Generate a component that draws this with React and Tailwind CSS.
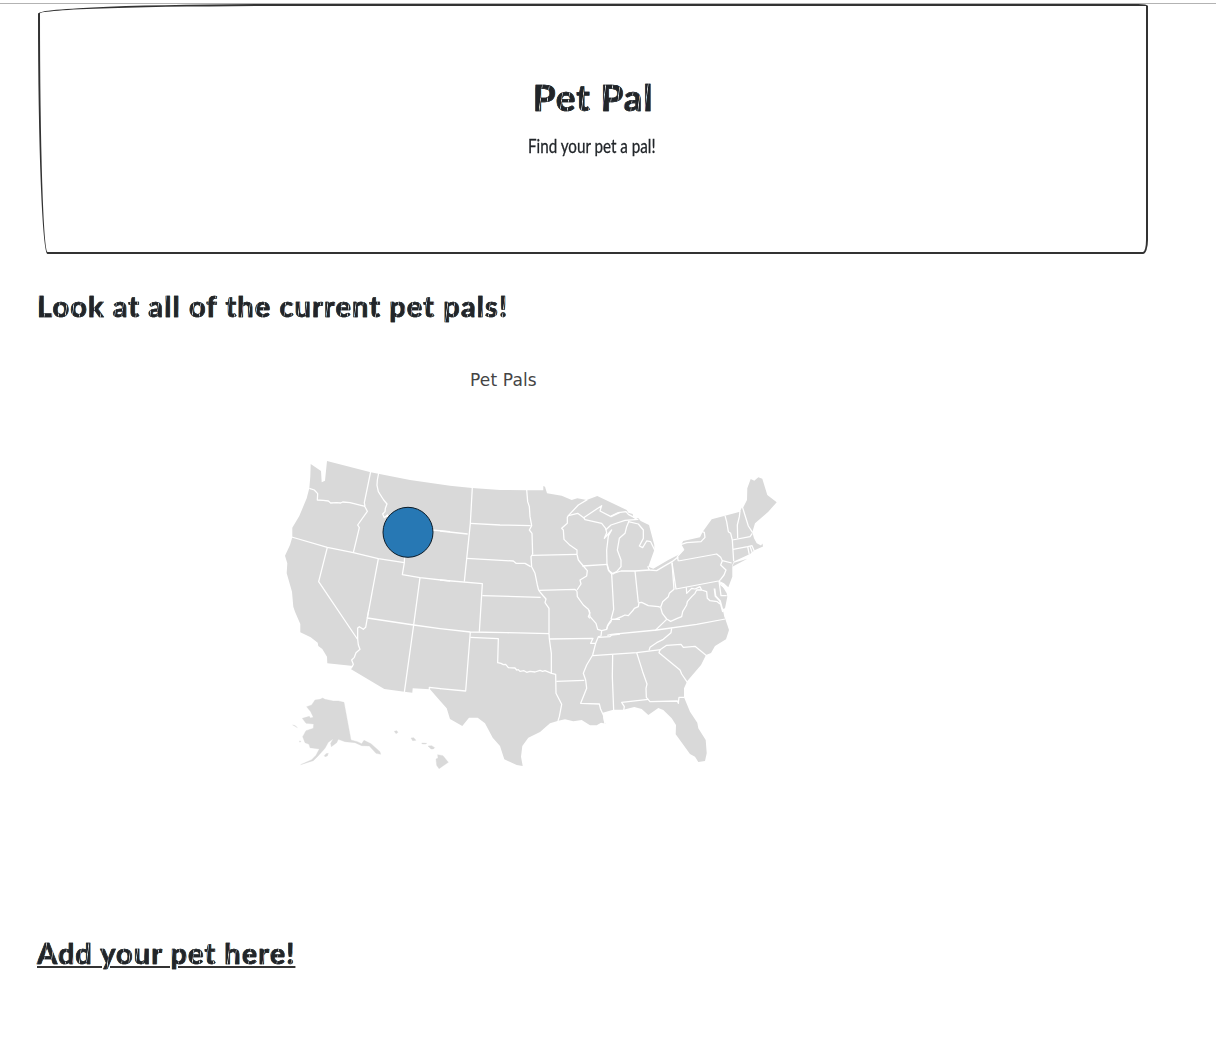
const ns = "fill-none stroke-white";

const sketch =
  "bg-[repeating-linear-gradient(97deg,#212529_0px,#212529_3px,#dfe1e3_3.6px,#212529_4.4px,#212529_7px)] bg-clip-text text-transparent [-webkit-text-stroke:0.6px_#212529]";

const mainland =
  "310.7,464 321,471 321.7,482.3 325,480.7 327,461 370.7,472.3 410,480 450,485.7 472,488 500,490 526.7,490.3 543.3,490.3 543.3,486 545,486.7 547,493.3 561.7,495.7 571.7,500 577.3,498.3 586.7,500 597.3,496 626.7,510 628.3,512.7 632.7,514 633.3,517.7 636,519.3 638,517.7 640.7,521 649,525 654.3,545 654.3,550 648.3,566.7 653.3,568.7 668.3,560 680,554 684,549 681.3,544.3 683.3,541 700,537.3 702.7,531.7 711.7,519.3 725,515.7 740,511.7 741.7,507.7 743.3,507.3 747,500 747.3,488.3 750.7,479 754.3,480.7 758.3,477.3 762.3,478.7 767.3,495 776.7,502.3 768.3,511.7 755,523.3 752.3,532.3 754,538.3 756.7,543.3 761,545.5 762.5,543.5 763,546.5 755,550 750,554 733.8,561.5 732.3,565 732.3,576.7 728.3,587.3 724,583.3 719.3,581 726.7,593.3 727.3,596.7 725,608.3 722.7,609 724.3,616.7 725.3,619 729,630 726,639.3 715,646 711,653 706,655 701,665 687.3,681 684,688.3 684,697.3 690,711.7 697.3,722.7 698.3,728.3 705.7,740 706.7,753.3 705,761 698.3,762 695,756.7 690,754 675.7,734.3 676,725 671.7,718.3 663.3,710 658.3,708 648.3,715 641.7,709 634.3,707 623.3,709.7 613.3,709.7 602.7,712.7 604,721.7 606,723.7 601,722.7 596.7,725.3 590,725.3 581.7,720 573.3,721.3 565,719.3 558.3,720.7 550,723.3 540,732 528.3,737.7 522.3,746 521,756.7 522.7,766 516.7,765 504.3,759.3 500,746 492.7,737.7 485,723.3 477.7,717.7 469,717.7 462.3,726 450,719 446.7,708.3 440,700.7 430,689.3 412.7,688.3 412.3,692.7 404.3,691.7 384.3,689 350.7,669 353.3,666 327.3,663.3 327,656.7 322.3,649 318.3,646 317.7,642.7 310.7,637.3 300.3,632.3 300.3,624 295,611.7 293.3,606.7 292,591.7 286.7,573.3 287.3,563.3 285,555.7 290,545 292.3,537.3 292.3,527.7 299.3,516 306.7,498.3 309.3,488.3 310.3,476.7";

const northwest = [
  "118,115 133,120 143,131 142,150 160,151 175,153 182,159 200,158 212,159 218,156 240,158 285,169",
  "302,65 283,158 285,170 292,184 263,225 268,233 250,308",
  "326,69 322,90 321,106 325,125 341,150 351,162 346,175 345,185 338,192 343,203 352,195 370,240 402,245 485,240 540,245",
  "65,261 172,292 250,308 325,326 403,338",
  "172,292 146,395 262,567",
  "325,326 292,504",
  "407,245 403,338 397,374 450,383 540,393",
  "450,383 431,525 403,727",
];
const north = [
  "0,243 83,252",
  "97,112 91,220 73,395",
  "91,220 180,225 272,227",
  "260,119 263,155 268,170 270,200 275,227 268,240 276,250 278,313",
  "80,325 220,333 228,340 255,340 272,350",
  "275,316 411,313",
  "278,313 273,320 275,350 285,370 292,405 296,421",
  "296,421 405,418 411,424",
  "411,313 411,300 388,284 372,268 370,240 365,235 382,220 382,202 385,197 415,165 442,149",
  "385,197 413,190 431,203 435,209 485,220 497,235 500,248 493,265 515,240 505,258 500,300 501,345 507,362 521,373",
  "431,203 485,167 480,183 513,200 540,187",
  "427,348 503,343",
  "411,313 415,330 430,348 442,362 440,378 420,390 423,402 411,420",
  "411,424 412,440 430,465 445,478 450,488 445,500 450,505",
  "0,390 127,401 118,545",
  "127,437 302,442",
  "296,421 310,438 318,447 315,458 327,475 327,550",
];
const northeast = [
  "216,338 228,417 355,393",
  "235,333 350,312 362,322 367,332 395,339",
  "367,332 362,345 378,360 372,375 362,388 357,393 363,437 380,437",
  "357,393 364,406 376,415 385,430",
  "235,333 232,320 252,298",
  "242,284 260,278 303,275 315,262 313,247 306,245",
  "143,349 148,360 170,362 190,350 216,335 235,320",
  "40,370 63,363 105,363 148,360",
  "105,363 115,458",
  "35,372 41,478 33,508",
  "375,197 380,215 385,245 392,250 397,270 401,334",
  "420,183 418,200 412,225 413,265",
  "397,270 450,260 457,250",
  "427,170 445,228 458,248",
  "399,298 443,290 456,287 463,304",
  "443,290 448,314",
  "450,289 457,309",
  "22,343 25,360 35,372 50,365 63,350 63,330 52,300 58,265 75,250 80,230 87,213",
  "17,240 33,225 75,211 115,208",
  "33,198 55,188 78,185 85,193 108,205",
  "85,215 115,222 130,240 130,265 118,288 128,293 140,273 152,275 165,302",
  "33,508 45,508 65,500 75,495 85,497 100,480 103,475 115,470 117,458 125,457 145,467 175,470 182,472",
  "182,472 188,455 205,440 208,430 222,418 216,338",
  "182,472 187,490 200,507 212,514 230,506 245,500 248,485 260,465 262,455 275,440 285,430 290,420 305,420",
  "259,412 260,430 275,415 285,417 300,410 305,420 320,425 322,445 330,452 352,455 360,462",
];
const southwest = [
  "296,0 287,52 280,58 268,50 263,54 263,87 265,105 270,118 258,128 253,142 245,150 250,163 243,175",
  "292,24 431,45 510,56",
  "478,240 478,232 512,236",
];
const south = [
  "0,236 77,243 91,66",
  "0,56 91,66 200,68 327,71",
  "91,82 175,86 173,158 183,160 190,164 197,163 205,173 225,174 230,180 235,179 240,184 252,182 260,187 270,184 285,186 300,181 308,184 315,182 335,190 347,193 348,250 365,283 358,320 354,333",
  "327,70 328,87 334,130 334,190",
  "328,87 459,85 452,100 467,100",
  "447,0 450,20 468,40 473,58 485,62 483,78 475,80 467,100 458,135 440,165 430,190 437,210 440,235 422,280 478,282 482,298 490,315 495,342",
  "349,214 433,211",
  "518,134 517,200 521,300",
  "485,62 500,58 505,42 513,30",
  "475,82 510,80 515,75 540,72",
];
const southeast = [
  "22,76 35,73 170,60 290,43 376,27",
  "-22,137 110,128 183,119",
  "215,55 213,68 190,88 170,98 150,112 147,121",
  "165,62 200,28",
  "110,128 128,185 141,222 138,235 139,262 150,275 232,273 235,280 237,262 253,262",
  "145,268 65,277 73,290 71,301",
  "180,119 177,128 240,180 245,192 262,217",
  "180,119 200,106 243,103 250,112 285,109 320,137",
  "20,58 22,48 33,35 35,28 60,28",
];

const regions = [
  { at: "translate(270 450) scale(.33333)", lines: northwest },
  { at: "translate(440 450) scale(.33333)", lines: north },
  { at: "translate(600 450) scale(.33333)", lines: northeast },
  { at: "translate(270 610) scale(.33333)", lines: southwest },
  { at: "translate(440 610) scale(.33333)", lines: south },
  { at: "translate(600 610) scale(.33333)", lines: southeast },
];

const islands = [
  "158,264 165,268 190,273 205,273 222,277 243,390 262,395 275,401 282,391 303,401 330,425 332,433 318,430 298,408 275,407 255,398 225,395 205,388 200,398 184,410 182,400 190,386 175,397 165,415 145,437 130,452 92,464 125,449 138,436 148,417 120,413 117,403 105,398 98,380 108,362 130,355 131,342 108,340 97,325 118,319 121,324 130,322 122,305 110,290 125,285 135,270 150,268",
  "163,437 168,431 175,430 172,438 165,440",
  "68,345 76,347 82,353 75,349",
  "88,393 93,394 90,397",
  "373,364 380,362 384,367 378,371",
  "423,384 431,383 438,391 428,392",
  "455,399 470,400 468,402 457,402",
  "474,408 485,407 494,413 490,417 483,417",
  "503,434 519,437 535,457 507,476 500,466 498,447 504,444",
];

function UsaMap() {
  return (
    <svg
      className="block"
      width="540"
      height="340"
      viewBox="260 440 540 340"
      role="img"
      aria-label="Map of the United States"
    >
      <g fill="#d9d9d9">
        <polygon points={mainland} />
        <polygon points="732.3,566.7 734,562.7 747.3,558.7 741.7,561.7" />
        <g transform="translate(270 610) scale(.33333)" stroke="#d9d9d9" strokeWidth="1">
          {islands.map((p) => (
            <polygon key={p} points={p} />
          ))}
        </g>
      </g>
      {regions.map((r) => (
        <g key={r.at} transform={r.at} className={ns} strokeWidth="3.8" strokeLinejoin="round">
          {r.lines.map((p) => (
            <polyline key={p} points={p} />
          ))}
        </g>
      ))}
      <path
        d="M714.5 588.5 L715.5 596 L720 601 L723 612"
        className={ns}
        strokeWidth="1.8"
      />
      <circle cx="408" cy="532.3" r="25" fill="#2778b4" stroke="#0b1a26" strokeWidth="1" />
    </svg>
  );
}

export default function App() {
  return (
    <div className="flex h-[1048px] w-full flex-col overflow-hidden bg-white pt-[3px] font-['Lato',sans-serif] text-[#212529]">
      <div className="h-px shrink-0 bg-[#b3b3b3]" />
      <main className="ml-[38px] flex w-[1110px] flex-col">
        <header className="flex h-[250px] flex-col items-center rounded-[240px_10px_5px_9.5px/9.5px_2px_14px_240px] border-2 border-[#333] pt-[67px]">
          <h1
            className={`text-[37px] leading-[48px] font-bold tracking-[0.8px] whitespace-nowrap ${sketch}`}
          >
            Pet Pal
          </h1>
          <p className="mt-[10px] mr-[2px] origin-center scale-x-[0.8] text-[19px] leading-[30px] whitespace-nowrap [-webkit-text-stroke:0.3px_#212529]">
            Find your pet a pal!
          </p>
        </header>
        <h2
          className={`mt-[33px] -ml-px self-start text-[29px] leading-[38px] font-bold tracking-[1.1px] whitespace-nowrap ${sketch}`}
        >
          Look at all of the current pet pals!
        </h2>
        <section className="h-[609px]">
          <p className="mt-[44px] ml-[432px] font-['DejaVu_Sans',sans-serif] text-[17px] leading-[22px] tracking-[0.15px] whitespace-nowrap text-[#444]">
            Pet Pals
          </p>
          <div className="mt-[49px] ml-[222px]">
            <UsaMap />
          </div>
        </section>
        <a
          href="#add"
          className={`-ml-px self-start text-[29px] leading-[38px] font-bold tracking-[1.04px] whitespace-nowrap underline decoration-[#333] decoration-2 underline-offset-[2px] ${sketch}`}
        >
          Add your pet here!
        </a>
      </main>
    </div>
  );
}
